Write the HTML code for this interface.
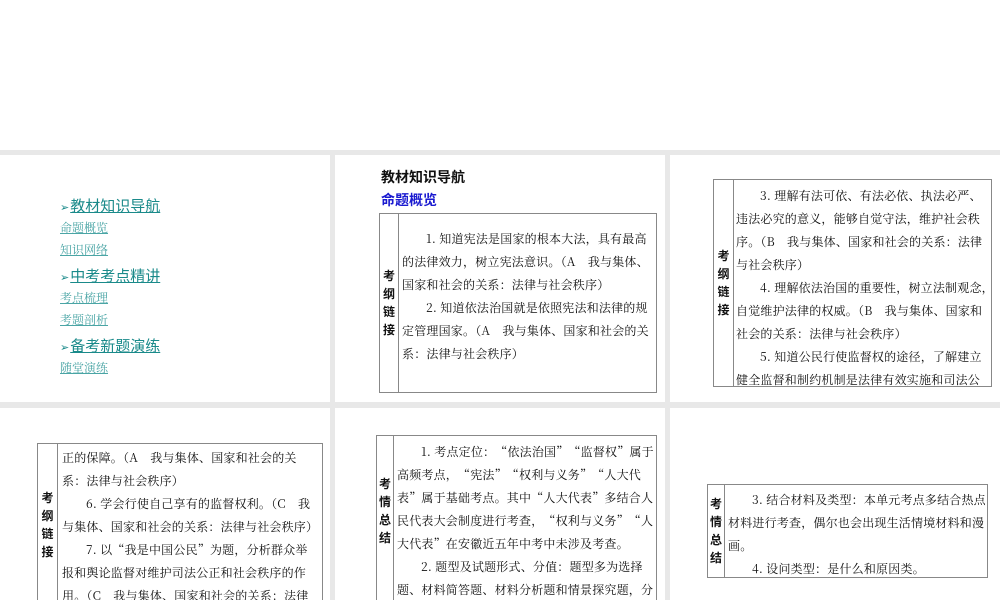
<!DOCTYPE html>
<html><head><meta charset="utf-8"><style>
html,body{margin:0;width:1000px;height:600px;overflow:hidden;}
#w{position:relative;width:1000px;height:600px;overflow:hidden;background:#fff;font-family:"Noto Serif CJK SC","Liberation Serif",serif;}
.bg{position:absolute;left:0;top:150px;width:1000px;height:450px;background:#e8e8e8;}
.p{position:absolute;background:#fff;}
.t{position:absolute;border:1px solid #888;background:#fff;}
.lab{position:absolute;top:0;bottom:0;left:0;border-right:1px solid #888;font-family:"Noto Sans CJK SC",sans-serif;font-weight:bold;font-size:12px;line-height:18px;display:flex;flex-direction:column;justify-content:center;align-items:center;color:#111;box-sizing:border-box;}
.tx{position:absolute;font-size:12px;letter-spacing:0.2px;white-space:nowrap;color:#111;}
.tx div{height:23px;line-height:23px;}
.i{padding-left:24px;}
.h{position:absolute;left:60px;font-family:"Noto Sans CJK SC",sans-serif;font-size:15px;line-height:18px;color:#1a8a8a;text-decoration:underline;}
.h span{font-size:11px;text-decoration:none;display:inline-block;margin-right:1px;}
.s{position:absolute;left:60px;font-size:12px;line-height:14px;color:#4aa5a5;text-decoration:underline;}
</style></head><body><div id="w">
<div class="bg"></div>
<div class="p" style="left:0;top:155px;width:330px;height:247px"></div>
<div class="p" style="left:335px;top:155px;width:330px;height:247px"></div>
<div class="p" style="left:670px;top:155px;width:330px;height:247px"></div>
<div class="p" style="left:0;top:408px;width:330px;height:192px"></div>
<div class="p" style="left:335px;top:408px;width:330px;height:192px"></div>
<div class="p" style="left:670px;top:408px;width:330px;height:192px"></div>

<div class="h" style="top:197px"><span>➢</span>教材知识导航</div>
<div class="s" style="top:221px">命题概览</div>
<div class="s" style="top:243px">知识网络</div>
<div class="h" style="top:267px"><span>➢</span>中考考点精讲</div>
<div class="s" style="top:291px">考点梳理</div>
<div class="s" style="top:313px">考题剖析</div>
<div class="h" style="top:337px"><span>➢</span>备考新题演练</div>
<div class="s" style="top:361px">随堂演练</div>

<div style="position:absolute;left:381px;top:168px;font-family:'Noto Sans CJK SC',sans-serif;font-weight:bold;font-size:14px;line-height:18px;color:#111">教材知识导航</div>
<div style="position:absolute;left:381px;top:191px;font-family:'Noto Sans CJK SC',sans-serif;font-weight:bold;font-size:14px;line-height:18px;color:#1a1ad0">命题概览</div>

<div class="t" style="left:379px;top:213px;width:276px;height:178px">
<div class="lab" style="width:19px">考<br>纲<br>链<br>接</div>
<div class="tx" style="left:22px;top:13px">
<div class="i">1. 知道宪法是国家的根本大法，具有最高</div>
<div>的法律效力，树立宪法意识。（A　我与集体、</div>
<div>国家和社会的关系：法律与社会秩序）</div>
<div class="i">2. 知道依法治国就是依照宪法和法律的规</div>
<div>定管理国家。（A　我与集体、国家和社会的关</div>
<div>系：法律与社会秩序）</div>
</div></div>

<div class="t" style="left:713px;top:179px;width:277px;height:206px">
<div class="lab" style="width:20px">考<br>纲<br>链<br>接</div>
<div class="tx" style="left:22px;top:4px">
<div class="i">3. 理解有法可依、有法必依、执法必严、</div>
<div>违法必究的意义，能够自觉守法，维护社会秩</div>
<div>序。（B　我与集体、国家和社会的关系：法律</div>
<div>与社会秩序）</div>
<div class="i">4. 理解依法治国的重要性，树立法制观念，</div>
<div>自觉维护法律的权威。（B　我与集体、国家和</div>
<div>社会的关系：法律与社会秩序）</div>
<div class="i">5. 知道公民行使监督权的途径，了解建立</div>
<div>健全监督和制约机制是法律有效实施和司法公</div>
</div></div>

<div class="t" style="left:37px;top:443px;width:284px;height:180px">
<div class="lab" style="width:20px;padding-bottom:18px">考<br>纲<br>链<br>接</div>
<div class="tx" style="left:24px;top:2px">
<div>正的保障。（A　我与集体、国家和社会的关</div>
<div>系：法律与社会秩序）</div>
<div class="i">6. 学会行使自己享有的监督权利。（C　我</div>
<div>与集体、国家和社会的关系：法律与社会秩序）</div>
<div class="i">7. 以“我是中国公民”为题，分析群众举</div>
<div>报和舆论监督对维护司法公正和社会秩序的作</div>
<div>用。（C　我与集体、国家和社会的关系：法律</div>
</div></div>

<div class="t" style="left:376px;top:435px;width:279px;height:190px">
<div class="lab" style="width:17px;padding-bottom:40px">考<br>情<br>总<br>结</div>
<div class="tx" style="left:20px;top:4px">
<div class="i">1. 考点定位：“依法治国”“监督权”属于</div>
<div>高频考点，“宪法”“权利与义务”“人大代</div>
<div>表”属于基础考点。其中“人大代表”多结合人</div>
<div>民代表大会制度进行考查，“权利与义务”“人</div>
<div>大代表”在安徽近五年中考中未涉及考查。</div>
<div class="i">2. 题型及试题形式、分值：题型多为选择</div>
<div>题、材料简答题、材料分析题和情景探究题，分</div>
<div>值2～4分。</div>
</div></div>

<div class="t" style="left:707px;top:484px;width:279px;height:92px">
<div class="lab" style="width:17px">考<br>情<br>总<br>结</div>
<div class="tx" style="left:20px;top:3px">
<div class="i">3. 结合材料及类型：本单元考点多结合热点</div>
<div>材料进行考查，偶尔也会出现生活情境材料和漫</div>
<div>画。</div>
<div class="i">4. 设问类型：是什么和原因类。</div>
</div></div>
</div></body></html>
